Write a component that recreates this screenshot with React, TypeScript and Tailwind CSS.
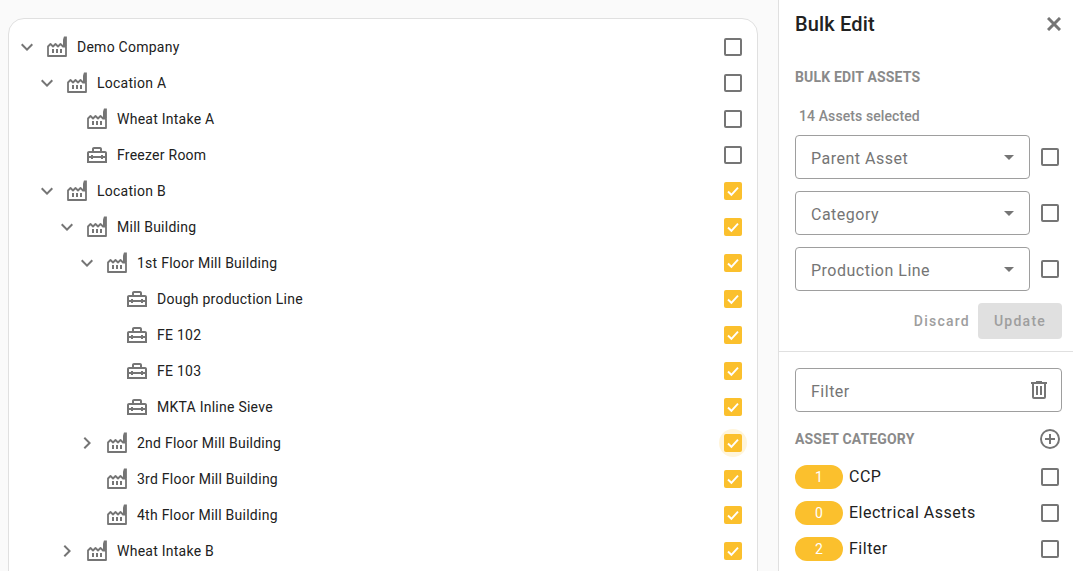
type Kind = 'factory' | 'case'

interface TreeRow {
  label: string
  depth: number
  kind: Kind
  arrow?: 'open' | 'closed'
  checked?: boolean
  focus?: boolean
}

const rows: TreeRow[] = [
  { label: 'Demo Company', depth: 0, kind: 'factory', arrow: 'open' },
  { label: 'Location A', depth: 1, kind: 'factory', arrow: 'open' },
  { label: 'Wheat Intake A', depth: 2, kind: 'factory' },
  { label: 'Freezer Room', depth: 2, kind: 'case' },
  { label: 'Location B', depth: 1, kind: 'factory', arrow: 'open', checked: true },
  { label: 'Mill Building', depth: 2, kind: 'factory', arrow: 'open', checked: true },
  { label: '1st Floor Mill Building', depth: 3, kind: 'factory', arrow: 'open', checked: true },
  { label: 'Dough production Line', depth: 4, kind: 'case', checked: true },
  { label: 'FE 102', depth: 4, kind: 'case', checked: true },
  { label: 'FE 103', depth: 4, kind: 'case', checked: true },
  { label: 'MKTA Inline Sieve', depth: 4, kind: 'case', checked: true },
  { label: '2nd Floor Mill Building', depth: 3, kind: 'factory', arrow: 'closed', checked: true, focus: true },
  { label: '3rd Floor Mill Building', depth: 3, kind: 'factory', checked: true },
  { label: '4th Floor Mill Building', depth: 3, kind: 'factory', checked: true },
  { label: 'Wheat Intake B', depth: 2, kind: 'factory', arrow: 'closed', checked: true },
]

const depthPad = ['pl-0', 'pl-[20px]', 'pl-[40px]', 'pl-[60px]', 'pl-[80px]']

function FactoryIcon() {
  return (
    <svg width="24" height="24" viewBox="0 0 24 24" fill="none" className="shrink-0">
      <path
        d="M3 21V11.5L5.5 9L8 11.5L10.5 9L13 11.5L15.5 9L18 11.5H21V21Z"
        stroke="#757575"
        strokeWidth="1.8"
        strokeLinejoin="round"
      />
      <path d="M18 11V4.5L19 1.5H21.9V11Z" fill="#757575" />
      <path d="M7 14H9V18H7ZM11 14H13V18H11ZM15 14H17V18H15Z" fill="#757575" />
    </svg>
  )
}

function CaseIcon() {
  return (
    <svg width="24" height="24" viewBox="0 0 24 24" fill="#757575" className="shrink-0">
      <path d="M20 8H17V6C17 4.9 16.1 4 15 4H9C7.9 4 7 4.9 7 6V8H4C2.9 8 2 8.9 2 10V20H22V10C22 8.9 21.1 8 20 8M9 6H15V8H9V6M20 18H4V15H6V16H8V15H16V16H18V15H20V18M18 13V12H16V13H8V12H6V13H4V10H20V13H18Z" />
    </svg>
  )
}

function Arrow({ dir }: { dir: 'open' | 'closed' }) {
  return (
    <svg width="24" height="24" viewBox="0 0 24 24" fill="#757575">
      <path d={dir === 'open' ? 'M16.59 8.59L12 13.17 7.41 8.59 6 10l6 6 6-6z' : 'M10 6L8.59 7.41 13.17 12l-4.58 4.59L10 18l6-6z'} />
    </svg>
  )
}

function Check({ checked = false, focus = false }: { checked?: boolean; focus?: boolean }) {
  return (
    <span className="relative flex h-[18px] w-[18px] shrink-0 items-center justify-center">
      {focus && <span className="absolute -inset-[5px] rounded-full bg-[#fff5dc]" />}
      {checked ? (
        <span className="relative flex h-[18px] w-[18px] items-center justify-center rounded-[2px] bg-[#fbc02d]">
          <svg width="14" height="14" viewBox="0 0 14 14" fill="none">
            <path d="M2 7.5L5.4 10.8L12 3.6" stroke="#fff" strokeWidth="1.9" />
          </svg>
        </span>
      ) : (
        <span className="h-[18px] w-[18px] rounded-[2px] border-2 border-[#757575]" />
      )}
    </span>
  )
}

function SelectBox({ label }: { label: string }) {
  return (
    <div className="flex items-center">
      <div className="flex h-[44px] w-[235px] items-center justify-between rounded border border-[#9e9e9e] pl-[15px] pr-[15px]">
        <span className="pt-[4px] text-[16px] tracking-[0.5px] text-[#757575]">{label}</span>
        <span className="h-0 w-0 border-x-[5px] border-t-[5px] border-x-transparent border-t-[#757575]" />
      </div>
      <span className="ml-[11px]">
        <Check />
      </span>
    </div>
  )
}

function CategoryRow({ count, label }: { count: number; label: string }) {
  return (
    <div className="flex h-[36px] items-center">
      <span className="flex h-[24px] w-[48px] items-center justify-center rounded-full bg-[#fbc02d] text-[14px] text-white">
        {count}
      </span>
      <span className="ml-[6px] flex-1 text-[16px] tracking-[0.5px] text-[#212121]">{label}</span>
      <span className="mr-[3px]">
        <Check />
      </span>
    </div>
  )
}

export default function App() {
  return (
    <div className="flex h-[571px] w-[1073px] overflow-hidden bg-[#fafafa] font-['Roboto',sans-serif]">
      <div className="w-[778px] shrink-0 pl-[8px] pr-[20px] pt-[18px]">
        <div className="h-[600px] rounded-2xl border border-[#e0e0e0] bg-white pl-[6px] pr-[15px] pt-[10px]">
          {rows.map((row) => (
            <div key={row.label} className={`flex h-[36px] items-center ${depthPad[row.depth]}`}>
              <span className="flex w-[24px] shrink-0 items-center justify-center">
                {row.arrow && <Arrow dir={row.arrow} />}
              </span>
              <span className="ml-[6px] mr-[8px] flex">{row.kind === 'factory' ? <FactoryIcon /> : <CaseIcon />}</span>
              <span className="flex-1 text-[14px] tracking-[0.25px] text-[#212121]">{row.label}</span>
              <Check checked={row.checked} focus={row.focus} />
            </div>
          ))}
        </div>
      </div>

      <div className="flex-1 border-l border-[#e0e0e0] bg-white">
        <div className="border-b border-[#e0e0e0] pb-[12px] pl-[16px] pr-[11px]">
          <div className="flex h-[48px] items-center justify-between">
            <h1 className="text-[20px] font-medium tracking-[0.15px] text-[#212121]">Bulk Edit</h1>
            <svg width="14" height="14" viewBox="0 0 14 14" className="mr-[1px]">
              <path d="M1 1L13 13M13 1L1 13" stroke="#757575" strokeWidth="3" />
            </svg>
          </div>
          <div className="mt-[12px] text-[14px] font-bold leading-[34px] tracking-[0.16px] text-[#8a8a8a]">BULK EDIT ASSETS</div>
          <div className="mt-[12px] pl-[4px] text-[14px] font-medium leading-[20px] tracking-[0.1px] text-[#8a8a8a]">14 Assets selected</div>
          <div className="mt-[9px] flex flex-col gap-[12px]">
            <SelectBox label="Parent Asset" />
            <SelectBox label="Category" />
            <SelectBox label="Production Line" />
          </div>
          <div className="mt-[12px] flex items-center justify-end">
            <span className="mr-[8px] text-[14px] font-medium tracking-[1.25px] text-[#9e9e9e]">Discard</span>
            <span className="flex h-[36px] w-[84px] items-center justify-center rounded bg-[#e0e0e0] text-[14px] font-medium tracking-[1.25px] text-[#9e9e9e]">
              Update
            </span>
          </div>
        </div>
        <div className="pl-[16px] pr-[11px] pt-[16px]">
          <div className="flex h-[44px] items-center justify-between rounded border border-[#9e9e9e] pl-[15px] pr-[10px]">
            <span className="pt-[4px] text-[16px] tracking-[0.5px] text-[#757575]">Filter</span>
            <svg width="24" height="24" viewBox="0 0 24 24" fill="#757575">
              <path d="M9 3v1H4v2h1v13a2 2 0 002 2h10a2 2 0 002-2V6h1V4h-5V3H9m-2 3h10v13H7V6m2 2v9h2V8H9m4 0v9h2V8h-2z" />
            </svg>
          </div>
          <div className="mt-[12px] flex h-[30px] items-center justify-between">
            <span className="text-[14px] font-bold tracking-[0.16px] text-[#8a8a8a]">ASSET CATEGORY</span>
            <svg width="24" height="24" viewBox="0 0 24 24" fill="#757575">
              <path d="M12 20c-4.41 0-8-3.59-8-8s3.59-8 8-8 8 3.59 8 8-3.59 8-8 8m0-18A10 10 0 0 0 2 12a10 10 0 0 0 10 10 10 10 0 0 0 10-10A10 10 0 0 0 12 2m1 5h-2v4H7v2h4v4h2v-4h4v-2h-4V7z" />
            </svg>
          </div>
          <div className="mt-[5px]">
            <CategoryRow count={1} label="CCP" />
            <CategoryRow count={0} label="Electrical Assets" />
            <CategoryRow count={2} label="Filter" />
          </div>
        </div>
      </div>
    </div>
  )
}
